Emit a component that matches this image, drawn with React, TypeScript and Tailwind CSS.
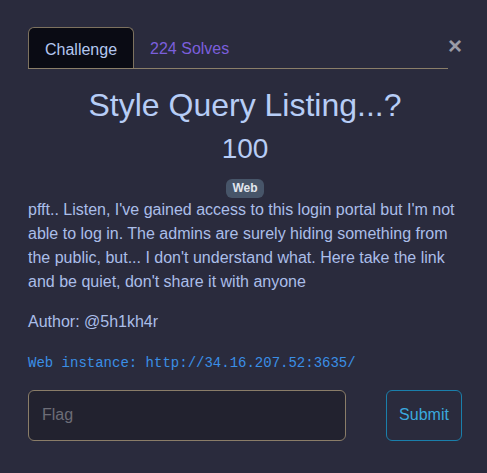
import React from "react";

const App = () => {
  return (
    <div className="min-h-[473px] w-full bg-[#2a2b3d] font-['Liberation_Sans',Arial,sans-serif] text-[#aabee9]">
      <div className="pl-[28px] pr-[25px] pt-[27px]">
        {/* Tabs + close */}
        <div className="flex items-start">
          <div className="flex flex-1 border-b border-[#8a7e69]">
            <div className="rounded-t-[6px] border border-b-0 border-[#7d725f] bg-[#0a0b14] px-4 pt-[10px] pb-[6px] text-[16px] leading-6 text-[#b4c7f0]">
              Challenge
            </div>
            <div className="px-4 pt-[10px] pb-[6px] text-[16px] leading-6 text-[#7b5fdc]">
              224 Solves
            </div>
          </div>
          <button className="mt-[1px] text-[24px] font-bold leading-[36px] text-[#9b9ba6]">
            ×
          </button>
        </div>

        {/* Title */}
        <h2 className="mt-[17px] mb-2 text-center text-[32px] leading-[1.2] text-[#b7cdf6]">
          Style Query Listing...?
        </h2>
        <h3 className="text-center text-[28px] leading-[1.2] text-[#b7cdf6]">
          100
        </h3>
        <div className="mt-[13px] flex justify-center">
          <span className="rounded-[6px] bg-[#475569] px-[6px] text-[12px] font-bold leading-[19px] text-[#e2e6ee]">
            Web
          </span>
        </div>

        {/* Description */}
        <p className="mb-4 text-[16px] leading-6">
          pfft.. Listen, I've gained access to this login portal but I'm not
          able to log in. The admins are surely hiding something from the
          public, but... I don't understand what. Here take the link and be
          quiet, don't share it with anyone
        </p>
        <p className="mb-[19px] text-[16px] leading-6">Author: @5h1kh4r</p>
        <p className="font-['Liberation_Mono',monospace] text-[14px] leading-[21px] text-[#3a8fe6]">
          Web instance: http://34.16.207.52:3635/
        </p>

        {/* Flag form */}
        <div className="mt-[16px] flex items-start">
          <input
            placeholder="Flag"
            className="h-[51px] w-[318px] rounded-[6px] border border-[#8a7d68] bg-[#22222f] px-[13px] text-[16px] text-[#d0d0d8] outline-none placeholder:text-[#6d6d77]"
          />
          <button className="ml-auto h-[51px] w-[76px] rounded-[6px] border border-[#1a7fab] text-[16px] text-[#3aa9de]">
            Submit
          </button>
        </div>
      </div>
    </div>
  );
};

export default App;
